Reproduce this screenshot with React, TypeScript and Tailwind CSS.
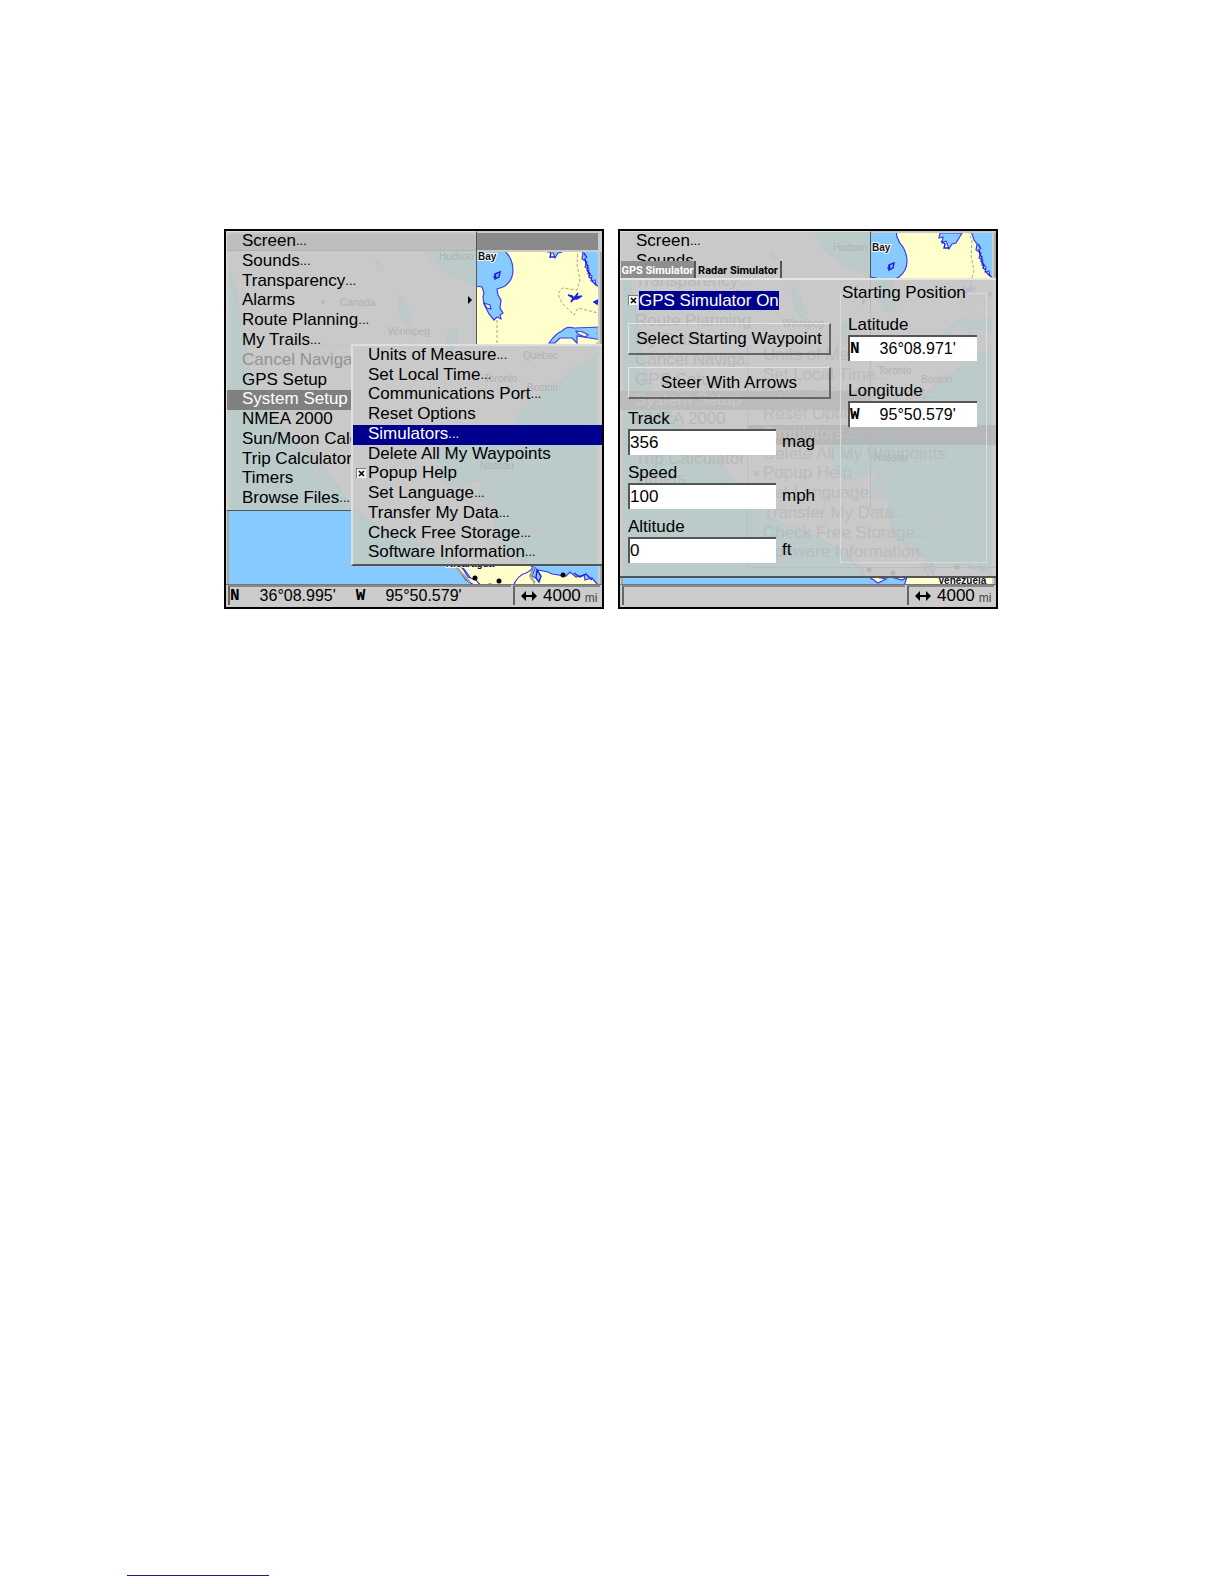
import { useState } from "react";
import clsx from "clsx";

type Item = {
  label: string;
  disabled?: boolean;
  submenu?: boolean;
  checked?: boolean;
};

const MAIN_MENU: Item[] = [
  { label: "Screen..." },
  { label: "Sounds..." },
  { label: "Transparency..." },
  { label: "Alarms", submenu: true },
  { label: "Route Planning..." },
  { label: "My Trails..." },
  { label: "Cancel Naviga", disabled: true },
  { label: "GPS Setup" },
  { label: "System Setup" },
  { label: "NMEA 2000" },
  { label: "Sun/Moon Calc" },
  { label: "Trip Calculator" },
  { label: "Timers" },
  { label: "Browse Files..." },
];

const SYSTEM_MENU: Item[] = [
  { label: "Units of Measure..." },
  { label: "Set Local Time..." },
  { label: "Communications Port..." },
  { label: "Reset Options" },
  { label: "Simulators..." },
  { label: "Delete All My Waypoints" },
  { label: "Popup Help", checked: true },
  { label: "Set Language..." },
  { label: "Transfer My Data..." },
  { label: "Check Free Storage..." },
  { label: "Software Information..." },
];

const CITIES = [
  { name: "Hudson", x: 439, y: 260 },
  { name: "Canada", x: 340, y: 306 },
  { name: "Winnipeg", x: 388, y: 335 },
  { name: "Quebec", x: 523, y: 359 },
  { name: "Toronto", x: 484, y: 382 },
  { name: "Boston", x: 527, y: 391 },
  { name: "Nassau", x: 480, y: 469 },
];

const FULL = {
  land: "#ffffcc",
  water: "#86caff",
  shore: "#3c3cf0",
  lake: "#2020e0",
  border: "#a5a585",
  dot: "#000000",
};

// what shows through the see-through menus
const MUTED = {
  land: "#c9c9c9",
  water: "#bacbca",
  shore: "#c1c4cb",
  lake: "#b9bccb",
  border: "#c1c1c1",
  dot: "#b4b4b4",
};

function ChartMap({ viewBox, muted }: { viewBox: string; muted?: boolean }) {
  const c = muted ? MUTED : FULL;
  const [x, y, w, h] = viewBox.split(" ").map(Number);
  const cities = CITIES.filter(
    (city) => city.x > x && city.x + 36 < x + w && city.y - 10 > y && city.y < y + h
  );
  return (
    <svg
      className="absolute inset-0 h-full w-full"
      viewBox={viewBox}
      preserveAspectRatio="xMinYMin slice"
      aria-hidden="true"
    >
      <rect x="226" y="225" width="376" height="400" fill={c.land} />
      {/* water */}
      <g fill={c.water} stroke={c.shore} strokeWidth="1.2">
        <path d="M420 238H504Q501 243 504 248Q505 252 509 256Q513 263 513 270Q513 280 505 286Q501 288 497 289L498 295L501 300L500 308L503 313L500 315L501 319L497 317L494 320L489 314L484 304L483 297L484 293L482 287L476 286L462 279L448 275L440 266L428 256Z" />
        <path d="M546 242L545 247L549 246L548 252L552 250L555 258L558 253L562 252L568 242Z" />
        <path d="M577 240L580 249L583 253L582 259L587 262L585 267L589 269L588 274L592 276L591 281L595 280L596 285L602 288V240Z" />
        <path d="M549 343Q556 333 562 331Q566 326 574 328L602 327V348L590 360L575 366L562 380L548 387L532 402L518 415L515 424L523 440L522 449L515 444L508 430L490 432L478 436L455 434L440 446L436 462L444 482L460 488L474 480L482 482L478 496L496 502L494 522L500 545L520 560L533 567L528 574L516 585L508 589L490 584L478 588L472 580L464 569L448 560L415 540L380 528L350 505L335 482L318 460L308 440L303 446L330 488L312 468L296 442L278 424L256 395L248 360L243 325L236 290L226 262V625H480L520 600L535 592L602 588V340L577 336L577 343L572 338L560 338L555 343Z" />
        <path d="M398 295L404 300L412 322L408 326L400 314Z" />
        <path d="M376 260L384 268L378 272Z" />
        <path d="M448 332L458 328L456 342L450 354L446 348Z" />
      </g>
      <g fill={c.land} stroke={c.shore} strokeWidth="1.2">
        <path d="M484 303L490 305L491 309L487 308Z" />
        <path d="M576 331Q583 331 588 335L585 337L578 334Z" />
        <path d="M482 470L486 482L494 496L490 485Z" />
        <path d="M462 495L492 504L482 507L464 500ZM530 526L545 530L538 534Z" />
        <path d="M513 586Q518 575 526 573L535 568L532 576L539 580L538 570L548 572L552 574L566 576L570 572L576 577L584 575L585 580L592 578L598 585L602 590V625H500Z" />
        <path d="M452 560L463 569L468 577L476 580L481 586L492 588L484 592L474 585L466 580Z" />
      </g>
      <g fill={c.lake} stroke={c.lake} strokeWidth="1.4">
        <path d="M495 274L500 272L499 277L495 279L496 275L494 278Z" fill={c.water} />
        <path d="M568 295L572 296L574 298L578 293L576 297L582 296L577 299L574 299L571 302L573 298Z" />
        <path d="M594 302L598 300L597 304Z" />
        <path
          d="M585 258L586 264L588 266L587 270L590 274L589 277L592 279M547 250L551 253L550 257L555 257M584 253L587 258M592 281L596 285"
          fill="none"
        />
        <path d="M537 570L541 576L539 582L536 578Z" fill={c.water} />
        <path d="M574 573L580 577L586 574L592 580" fill="none" />
      </g>
      {/* political borders */}
      <g fill="none" stroke={c.border} strokeWidth="1" strokeDasharray="3 2">
        <path d="M497 320V344M574 240L578 250L577 265L580 280L577 290L562 288L558 294L562 303L574 315L578 308L598 313" />
        <path d="M597 327V344M534 568L531 578L534 584M300 345H470" />
      </g>
      <path d="M534 568L530 576L535 583M455 566L470 582" fill="none" stroke={c.border} strokeWidth="2" />
      <g fill={c.dot}>
        <circle cx="475" cy="578" r="2.5" />
        <circle cx="499" cy="581" r="2.5" />
        <circle cx="563" cy="575" r="2.5" />
      </g>
      {muted ? (
        <g className="font-['Liberation_Sans'] text-[10px]" fill="#b1b1b1">
          <circle cx="323" cy="302" r="2" fill="#b9b9b9" />
          {cities.map((city) => (
            <text key={city.name} x={city.x} y={city.y}>
              {city.name}
            </text>
          ))}
        </g>
      ) : (
        <g
          className="font-['Liberation_Sans'] text-[10px] font-bold"
          fill="#111111"
          stroke="#ffffff"
          strokeWidth="2"
          paintOrder="stroke"
        >
          <text x="478" y="260">Bay</text>
          <text x="446" y="567">Nicaragua</text>
          <text x="544" y="593">Venezuela</text>
        </g>
      )}
      {/* frame */}
      <path d="M226 225H229V625H226ZM598 225H602V625H598Z" fill="#cccccc" />
      {!muted && <path d="M228 225V625M601 225V625" stroke="#7d8a7d" strokeWidth="1" />}
    </svg>
  );
}

function CheckMark({ faint }: { faint?: boolean }) {
  return (
    <svg className="h-[10px] w-[10px]" viewBox="0 0 10 10" aria-hidden="true">
      {!faint && (
        <>
          <rect width="10" height="10" fill="#f4f4f4" />
          <path d="M0 10V0H10" fill="none" stroke="#555555" strokeWidth="1.5" />
        </>
      )}
      <path d="M3 3L8 8M8 3L3 8" stroke="currentColor" strokeWidth="1.6" />
    </svg>
  );
}

function MenuList({
  items,
  active,
  className,
  activeClass,
  faint,
}: {
  items: Item[];
  active: string;
  className: string;
  activeClass: string;
  faint?: boolean;
}) {
  return (
    <ul className={clsx("relative grid auto-rows-fr text-[17px] leading-[18px]", className)}>
      {items.map((item) => (
        <li key={item.label} className="min-h-0">
          <button
            type="button"
            disabled={item.disabled}
            className={clsx(
              "flex h-full w-full items-start whitespace-nowrap text-left",
              item.label === active && activeClass,
              item.disabled && !faint && "text-[#929292]"
            )}
          >
            <span className="flex w-[15px] shrink-0 justify-center pt-1">
              {item.checked && <CheckMark faint={faint} />}
            </span>
            {item.label.replace("...", "")}
            {item.label.endsWith("...") && <span className="text-[13px]">...</span>}
            {item.submenu && (
              <svg className="mr-1 ml-auto h-4 w-1" viewBox="0 0 4 16" aria-hidden="true">
                <path d="M0 5L4 9L0 13Z" fill="currentColor" />
              </svg>
            )}
          </button>
        </li>
      ))}
    </ul>
  );
}

function StatusBar({ position }: { position?: { lat: string; lon: string } }) {
  return (
    <footer className="relative mt-auto flex h-[23px] gap-[2px] border-t border-[#777777] bg-[#cccccc] px-[2px] pb-[2px] text-[16px] leading-[18px]">
      <div className="flex flex-1 gap-5 border-t-2 border-l-2 border-t-[#888888] border-l-[#666666]">
        {position && (
          <>
            <span className="flex gap-5">
              <b className="font-['Liberation_Mono']">N</b>
              {position.lat}
            </span>
            <span className="flex gap-5">
              <b className="font-['Liberation_Mono']">W</b>
              {position.lon}
            </span>
          </>
        )}
      </div>
      <div className="flex w-[87px] items-center border-t-2 border-l-2 border-t-[#888888] border-l-[#666666] pl-[6px]">
        <svg className="h-3 w-4" viewBox="0 0 16 12" aria-hidden="true">
          <path d="M0 6L5 1V5H11V1L16 6L11 11V7H5V11Z" />
        </svg>
        <span className="ml-[6px] text-[17px]">4000</span>
        <span className="mt-1 ml-1 text-[12px] text-[#444444]">mi</span>
      </div>
    </footer>
  );
}

function Screen({ children }: { children: React.ReactNode }) {
  return (
    <section className="relative flex h-[380px] w-[380px] shrink-0 flex-col overflow-hidden border-2 border-black bg-[#cccccc]">
      {children}
    </section>
  );
}

function MenuScreen() {
  return (
    <Screen>
      <ChartMap viewBox="226 231 376 376" />
      <div className="relative h-[21px] border-2 border-r-4 border-[#cccccc] bg-[#8a8a8a]" />
      <StatusBar position={{ lat: "36°08.995'", lon: "95°50.579'" }} />
      <nav className="absolute top-0 left-0 h-[280px] w-[251px] border border-t-[#dddddd] border-r-[#555555] border-b-[#555555] border-l-[#dddddd]">
        <ChartMap viewBox="227 232 249 278" muted />
        <div className="absolute inset-x-0 top-[2px] h-[17px] border-b border-[#b2b2b2] bg-[#bebebe]" />
        <MenuList
          items={MAIN_MENU}
          active="System Setup"
          className="h-[277px]"
          activeClass="bg-[#808080] text-white"
        />
      </nav>
      <nav className="absolute top-[113px] right-0 h-[222px] w-[251px] border-t-2 border-b-2 border-l-2 border-t-[#dedede] border-b-[#555555] border-l-[#dedede]">
        <ChartMap viewBox="353 346 249 218" muted />
        <MenuList
          items={SYSTEM_MENU}
          active="Simulators..."
          className="h-[217px]"
          activeClass="bg-[#00008c] text-white"
        />
      </nav>
    </Screen>
  );
}

function NumberField({ id, label, unit, initial }: { id: string; label: string; unit: string; initial: string }) {
  const [value, setValue] = useState(initial);
  return (
    <div className="pb-2">
      <label htmlFor={id} className="block leading-5">
        {label}
      </label>
      <div className="flex items-center gap-[6px]">
        <input
          id={id}
          value={value}
          onChange={(e) => setValue(e.target.value)}
          className="h-[26px] w-[148px] border-t-2 border-l-2 border-[#555555] bg-white text-[17px] outline-none"
        />
        <span>{unit}</span>
      </div>
    </div>
  );
}

function CoordField({ id, label, hemisphere, initial }: { id: string; label: string; hemisphere: string; initial: string }) {
  const [value, setValue] = useState(initial);
  return (
    <div>
      <label htmlFor={id} className="block leading-5">
        {label}
      </label>
      <div className="flex h-[26px] w-[129px] items-center gap-5 border-t-2 border-l-2 border-[#555555] bg-white text-[16px]">
        <b className="font-['Liberation_Mono']">{hemisphere}</b>
        <input
          id={id}
          value={value}
          onChange={(e) => setValue(e.target.value)}
          className="w-20 bg-transparent outline-none"
        />
      </div>
    </div>
  );
}

// the open menus, faintly visible behind the dialog
function DialogBackdrop() {
  return (
    <div className="absolute inset-0 overflow-hidden text-[#b7b9b9]" aria-hidden="true">
      <ChartMap viewBox="226 288 376 298" muted />
      <div className="absolute -top-2 left-0 w-[251px] border-r border-[#b9b9b9]">
        <MenuList
          items={MAIN_MENU.slice(2)}
          active="System Setup"
          className="h-[237px]"
          activeClass="bg-[#bcbcbc] text-[#c8c8c8]"
          faint
        />
      </div>
      <div className="absolute top-[66px] right-0 h-[222px] w-[249px] border-b border-l border-[#bcbcbc] opacity-80">
        <MenuList
          items={SYSTEM_MENU}
          active="Simulators..."
          className="h-[217px]"
          activeClass="bg-[#b4b4b4] text-[#c4c4c4]"
          faint
        />
      </div>
    </div>
  );
}

function SimulatorScreen() {
  const [on, setOn] = useState(true);
  const buttonClass =
    "h-8 w-[203px] border border-t-[#e4e4e4] border-l-[#e4e4e4] border-r-2 border-b-2 border-r-[#666666] border-b-[#666666] leading-5";

  return (
    <Screen>
      <ChartMap viewBox="226 240 376 376" />
      <div className="relative h-[2px] bg-[#cccccc]" />
      <StatusBar />
      <nav className="absolute top-0 left-0 h-[47px] w-[251px] overflow-hidden border-t border-r border-t-[#dddddd] border-r-[#555555]">
        <ChartMap viewBox="226 241 250 46" muted />
        <MenuList
          items={MAIN_MENU.slice(0, 2)}
          active="System Setup"
          className="h-[39px] pl-px"
          activeClass="bg-[#808080] text-white"
        />
      </nav>

      <form className="absolute inset-x-0 top-[30px]">
        <div className="flex h-[17px] pl-px font-['Roboto'] text-[11px] leading-[19px] font-bold">
          <button type="button" className="w-[75px] border-r-2 border-[#555555] bg-[#8e8e8e] text-white">
            GPS Simulator
          </button>
          <button type="button" className="w-[86px] border-r-2 border-[#555555] bg-[#c9c9c9]">
            Radar Simulator
          </button>
        </div>
        <div className="relative h-[300px] border-t-2 border-b-2 border-t-[#e4e4e4] border-b-[#555555]">
          <DialogBackdrop />
          <div className="relative flex justify-between pr-[9px] pl-2 text-[17px]">
            <div className="pt-[10px]">
              <label className="relative flex h-5 items-center gap-px">
                <input
                  type="checkbox"
                  checked={on}
                  onChange={() => setOn(!on)}
                  className="absolute h-[10px] w-[10px] opacity-0"
                />
                <CheckMark />
                <span className="bg-[#00008c] leading-[19px] text-white">GPS Simulator On</span>
              </label>
              <div className="flex flex-col gap-3 pt-[13px]">
                <button type="button" className={buttonClass}>
                  Select Starting Waypoint
                </button>
                <button type="button" className={buttonClass}>
                  Steer With Arrows
                </button>
              </div>
              <div className="pt-[10px]">
                <NumberField id="track" label="Track" unit="mag" initial="356" />
                <NumberField id="speed" label="Speed" unit="mph" initial="100" />
                <NumberField id="altitude" label="Altitude" unit="ft" initial="0" />
              </div>
            </div>
            <fieldset className="mt-[3px] h-[280px] w-[147px] border border-[#dadada] pl-[7px]">
              <legend className="-ml-[7px] px-px leading-5">Starting Position</legend>
              <div className="flex flex-col gap-5 pt-3">
                <CoordField id="lat" label="Latitude" hemisphere="N" initial="36°08.971'" />
                <CoordField id="lon" label="Longitude" hemisphere="W" initial="95°50.579'" />
              </div>
            </fieldset>
          </div>
        </div>
      </form>
    </Screen>
  );
}

export default function App() {
  return (
    <div className="flex min-h-screen flex-col bg-white font-['Liberation_Sans',Arial,sans-serif] text-black">
      <main className="flex flex-wrap justify-center gap-[14px] pt-[229px] pr-[2px]">
        <MenuScreen />
        <SimulatorScreen />
      </main>
      <footer className="mt-auto pb-2 pl-[127px]">
        <a href="#top" aria-label="Website" className="block h-4 w-[142px] border-b border-[#1a1a8c]" />
      </footer>
    </div>
  );
}
